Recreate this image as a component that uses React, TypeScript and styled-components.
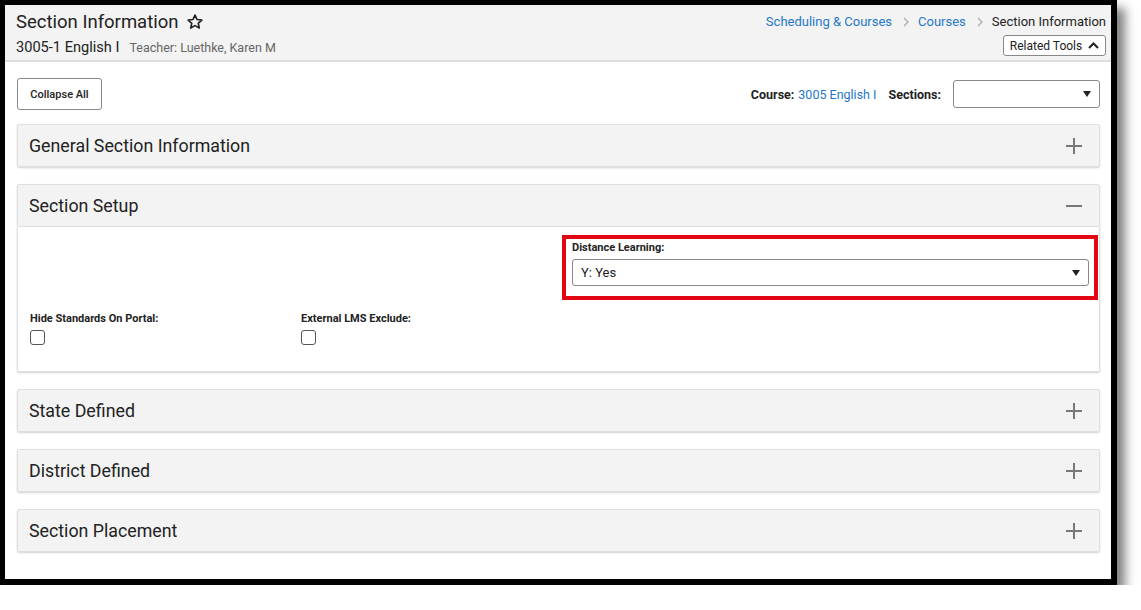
import React from 'react';
import styled, { createGlobalStyle } from 'styled-components';

const GlobalStyle = createGlobalStyle`
  html, body {
    margin: 0;
    padding: 0;
    background: #ffffff;
  }
  body {
    font-family: Roboto, "Liberation Sans", Arial, sans-serif;
    color: #222;
  }
`;

const Frame = styled.div`
  width: 1106px;
  height: 574px;
  border-style: solid;
  border-color: #000;
  border-width: 5px 6px 6px 5px;
  box-shadow: 8px 8px 10px rgba(0, 0, 0, 0.5);
  background: #fff;
  display: flex;
  flex-direction: column;
  overflow: hidden;
`;

const Header = styled.header`
  background: #f3f3f3;
  border-bottom: 2px solid #dedede;
  height: 57px;
  flex-shrink: 0;
  box-sizing: border-box;
  padding: 0 5px 0 11px;
  display: flex;
  justify-content: space-between;
`;

const HeaderLeft = styled.div`
  display: flex;
  flex-direction: column;
  padding-top: 5px;
`;

const TitleRow = styled.div`
  display: flex;
  align-items: center;
  gap: 7px;
`;

const Title = styled.h1`
  margin: 0;
  font-size: 18.5px;
  font-weight: 400;
  line-height: 24px;
  color: #222;
`;

const SubRow = styled.div`
  display: flex;
  align-items: baseline;
  gap: 10px;
  margin-top: 4px;
`;

const CourseName = styled.span`
  font-size: 14.6px;
  color: #222;
`;

const Teacher = styled.span`
  font-size: 12.5px;
  color: #666;
`;

const HeaderRight = styled.div`
  display: flex;
  flex-direction: column;
  align-items: flex-end;
  padding-top: 9px;
`;

const Breadcrumbs = styled.nav`
  display: flex;
  align-items: center;
  font-size: 13px;
  line-height: 16px;
`;

const Crumb = styled.a<{ $current?: boolean }>`
  color: ${(p) => (p.$current ? '#222' : '#1f78c8')};
  text-decoration: none;
`;

const CrumbSep = styled.span`
  display: inline-flex;
  margin: 0 9px 0 11px;
  color: #aaa;
`;

const RelatedButton = styled.button`
  margin-top: 5px;
  height: 21px;
  width: 103px;
  box-sizing: border-box;
  border: 1px solid #888;
  border-radius: 3px;
  background: #fff;
  font-family: inherit;
  font-size: 12px;
  color: #222;
  display: flex;
  align-items: center;
  justify-content: center;
  gap: 6px;
  padding: 0;
`;

const Content = styled.main`
  padding: 16px 11px 0 12px;
  display: flex;
  flex-direction: column;
`;

const Toolbar = styled.div`
  display: flex;
  justify-content: space-between;
  align-items: center;
  margin-bottom: 14px;
`;

const CollapseButton = styled.button`
  height: 32px;
  width: 85px;
  box-sizing: border-box;
  border: 1px solid #888;
  border-radius: 3px;
  background: #fff;
  font-family: inherit;
  font-size: 11px;
  font-weight: 500;
  color: #222;
  padding: 0;
`;

const CourseInfo = styled.div`
  display: flex;
  align-items: center;
  font-size: 12.5px;
`;

const Bold = styled.span`
  font-weight: 700;
  color: #222;
  margin-right: 4px;
`;

const CourseLink = styled.a`
  color: #1f78c8;
  margin-right: 12px;
`;

const SelectBox = styled.div<{ $width?: number; $height: number }>`
  box-sizing: border-box;
  width: ${(p) => (p.$width ? `${p.$width}px` : '100%')};
  height: ${(p) => p.$height}px;
  border: 1px solid #888;
  border-radius: 3px;
  background: #fff;
  display: flex;
  align-items: center;
  justify-content: space-between;
  padding: 0 8px 0 8px;
  font-size: 13px;
  color: #222;
`;

const SelectGap = styled.span`
  width: 8px;
`;

const Caret = styled.span`
  width: 0;
  height: 0;
  border-left: 4px solid transparent;
  border-right: 4px solid transparent;
  border-top: 6px solid #222;
`;

const Panel = styled.section`
  margin-bottom: 17px;
  box-shadow: 0 1px 2px rgba(0, 0, 0, 0.18);
  border-radius: 2px;
`;

const PanelHeader = styled.div`
  height: 43px;
  box-sizing: border-box;
  background: #f3f3f3;
  border: 1px solid #e0e0e0;
  border-radius: 2px;
  display: flex;
  align-items: center;
  justify-content: space-between;
  padding: 0 16px 0 11px;
`;

const PanelTitle = styled.h2`
  margin: 0;
  font-size: 17.8px;
  font-weight: 400;
  color: #222;
`;

const PanelBody = styled.div`
  border: 1px solid #e0e0e0;
  border-top: none;
  padding: 14px 12px 26px 12px;
  display: grid;
  grid-template-columns: repeat(4, 246px);
  column-gap: 25px;
  row-gap: 26px;
`;

const Field = styled.div<{ $span?: number; $start?: number; $highlight?: boolean }>`
  grid-column: ${(p) => `${p.$start ?? 'auto'} / span ${p.$span ?? 1}`};
  display: flex;
  flex-direction: column;
  position: relative;
  ${(p) =>
    p.$highlight
      ? `
    &::after {
      content: '';
      position: absolute;
      top: -6px;
      left: -10px;
      right: -9px;
      bottom: -14px;
      border: 4px solid #e30613;
      pointer-events: none;
    }
  `
      : ''}
`;

const Label = styled.label`
  font-size: 11px;
  font-weight: 700;
  color: #222;
  line-height: 14px;
  margin-bottom: 4px;
`;

const Checkbox = styled.span`
  width: 15px;
  height: 15px;
  box-sizing: border-box;
  border: 1px solid #555;
  border-radius: 3px;
  background: #fff;
`;

const Star = () => (
  <svg width="18" height="18" viewBox="0 0 24 24" fill="none" stroke="#222" strokeWidth="2.2" strokeLinejoin="round">
    <path d="M12 2.8l2.7 5.9 6.4.7-4.8 4.3 1.4 6.3L12 16.8 6.3 20l1.4-6.3L2.9 9.4l6.4-.7z" />
  </svg>
);

const Chevron = () => (
  <svg width="6" height="10" viewBox="0 0 6 10" fill="none" stroke="#aaa" strokeWidth="1.3">
    <path d="M1 1l4 4-4 4" />
  </svg>
);

const ChevronUp = () => (
  <svg width="11" height="7" viewBox="0 0 11 7" fill="none" stroke="#222" strokeWidth="2">
    <path d="M1 6l4.5-4.5L10 6" />
  </svg>
);

const ToggleIcon = ({ open }: { open: boolean }) => (
  <svg width="18" height="18" viewBox="0 0 18 18" stroke="#777" strokeWidth="2">
    <path d="M1 9h16" />
    {!open && <path d="M9 1v16" />}
  </svg>
);

const CollapsedPanel = ({ title }: { title: string }) => (
  <Panel>
    <PanelHeader>
      <PanelTitle>{title}</PanelTitle>
      <ToggleIcon open={false} />
    </PanelHeader>
  </Panel>
);

export default function App() {
  return (
    <>
      <GlobalStyle />
      <Frame>
        <Header>
          <HeaderLeft>
            <TitleRow>
              <Title>Section Information</Title>
              <Star />
            </TitleRow>
            <SubRow>
              <CourseName>3005-1 English I</CourseName>
              <Teacher>Teacher: Luethke, Karen M</Teacher>
            </SubRow>
          </HeaderLeft>
          <HeaderRight>
            <Breadcrumbs>
              <Crumb>Scheduling &amp; Courses</Crumb>
              <CrumbSep>
                <Chevron />
              </CrumbSep>
              <Crumb>Courses</Crumb>
              <CrumbSep>
                <Chevron />
              </CrumbSep>
              <Crumb $current>Section Information</Crumb>
            </Breadcrumbs>
            <RelatedButton>
              Related Tools <ChevronUp />
            </RelatedButton>
          </HeaderRight>
        </Header>
        <Content>
          <Toolbar>
            <CollapseButton>Collapse All</CollapseButton>
            <CourseInfo>
              <Bold>Course:</Bold>
              <CourseLink>3005 English I</CourseLink>
              <Bold>Sections:</Bold>
              <SelectGap />
              <SelectBox $width={147} $height={28}>
                <span />
                <Caret />
              </SelectBox>
            </CourseInfo>
          </Toolbar>

          <CollapsedPanel title="General Section Information" />

          <Panel>
            <PanelHeader>
              <PanelTitle>Section Setup</PanelTitle>
              <ToggleIcon open />
            </PanelHeader>
            <PanelBody>
              <Field $start={3} $span={2} $highlight>
                <Label>Distance Learning:</Label>
                <SelectBox $height={27}>
                  <span>Y: Yes</span>
                  <Caret />
                </SelectBox>
              </Field>
              <Field $start={1}>
                <Label>Hide Standards On Portal:</Label>
                <Checkbox />
              </Field>
              <Field>
                <Label>External LMS Exclude:</Label>
                <Checkbox />
              </Field>
            </PanelBody>
          </Panel>

          <CollapsedPanel title="State Defined" />
          <CollapsedPanel title="District Defined" />
          <CollapsedPanel title="Section Placement" />
        </Content>
      </Frame>
    </>
  );
}
